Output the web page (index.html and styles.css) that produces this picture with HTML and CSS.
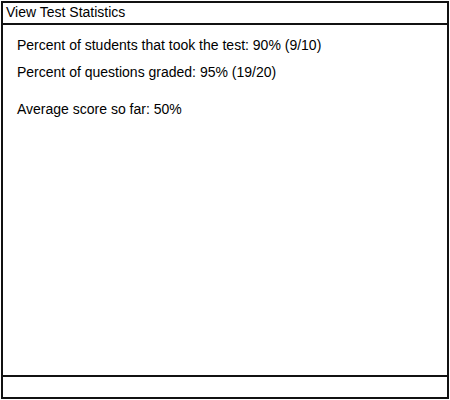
FILE: index.html
```html
<!DOCTYPE html>
<html>
<head>
<meta charset="utf-8">
<link rel="stylesheet" href="styles.css">
</head>
<body>
<div class="window">
  <div class="titlebar">View Test Statistics</div>
  <div class="content">
    <p class="stat">Percent of students that took the test: 90% (9/10)</p>
    <p class="stat">Percent of questions graded: 95% (19/20)</p>
    <p class="stat avg">Average score so far: 50%</p>
  </div>
  <div class="footer"></div>
</div>
</body>
</html>
```
FILE: styles.css
```css
html, body {
  margin: 0;
  padding: 0;
  background: #fff;
}
body {
  font-family: "Liberation Sans", Arial, sans-serif;
  color: #000;
}
.window {
  margin: 1px 0 0 1px;
  width: 448px;
  height: 398px;
  box-sizing: border-box;
  border: 2px solid #111;
  display: flex;
  flex-direction: column;
}
.titlebar {
  height: 22px;
  box-sizing: border-box;
  border-bottom: 2px solid #111;
  font-size: 14px;
  line-height: 18px;
  padding-left: 3px;
}
.content {
  flex: 1;
  padding: 11px 0 0 14px;
}
.stat {
  margin: 0 0 8px 0;
  font-size: 14px;
  line-height: 19px;
}
.stat.avg {
  margin-top: 18px;
}
.footer {
  height: 22px;
  box-sizing: border-box;
  border-top: 2px solid #111;
}
```
